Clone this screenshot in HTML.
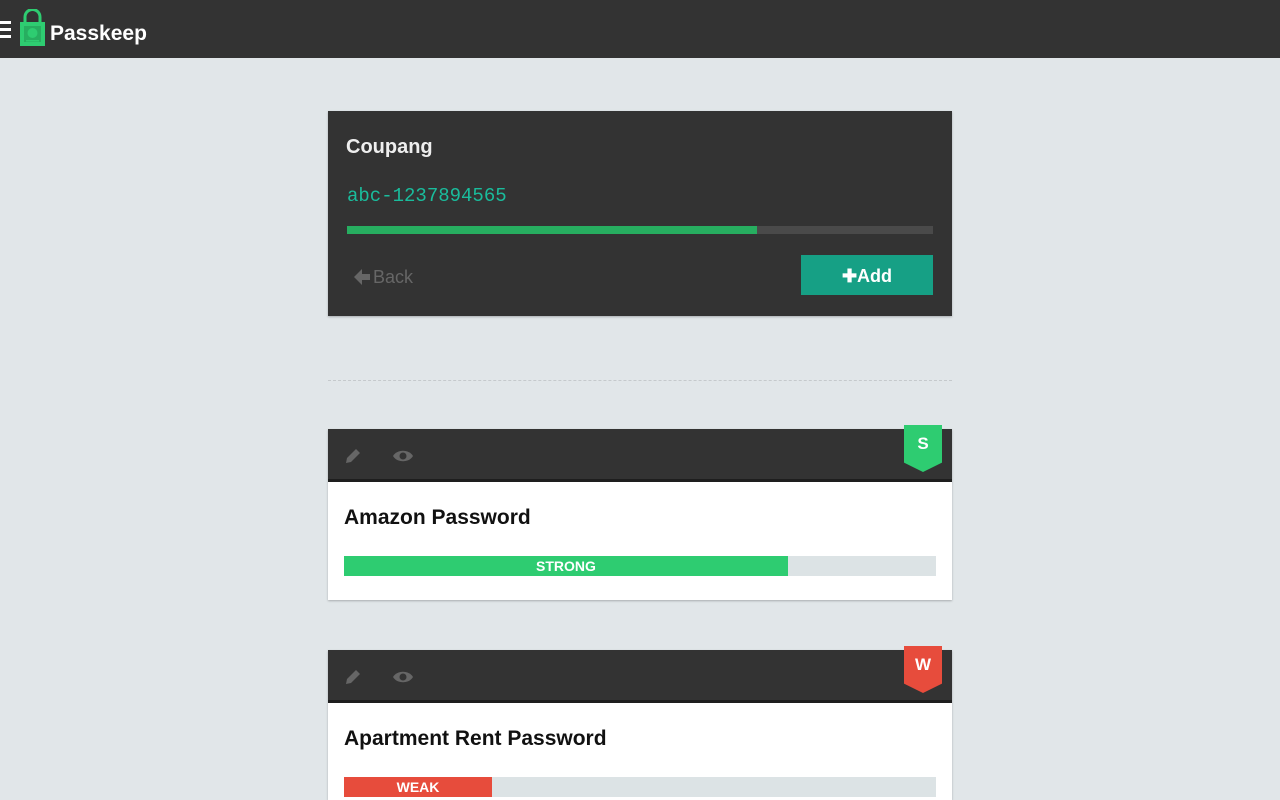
<!DOCTYPE html><html><head><style>
html,body{margin:0;width:1280px;height:800px;overflow:hidden}
body{background:#e1e6e9;font-family:"Liberation Sans",sans-serif;position:relative}
.top{position:absolute;left:0;top:0;width:1280px;height:58px;background:#333}
.abs{position:absolute}
.card{position:absolute;left:328px;width:624px;box-shadow:0 1px 2px rgba(0,0,0,.25)}
.hd{height:50px;background:#333;border-bottom:3px solid #1e1e1e;position:relative}
.bd{background:#fff;position:relative}
.ttl{position:absolute;left:16px;font-weight:bold;font-size:21px;color:#111}
.bar{position:absolute;left:16px;width:592px;height:20px;background:#dce3e5}
.bar div{height:20px;color:#fff;font-weight:bold;font-size:14px;text-align:center;line-height:21px}
.badge{position:absolute;right:10px;top:-4px;width:38px;height:47px;color:#fff;font-weight:bold;font-size:17px;text-align:center;line-height:38px;clip-path:polygon(0 0,100% 0,100% 80%,50% 100%,0 80%)}
</style></head><body>
<div class="top">
<div class="abs" style="left:0;top:21px;width:11px;height:3px;background:#fff;box-shadow:0 7px 0 #fff,0 14px 0 #fff"></div>
<svg class="abs" style="left:19px;top:9px" width="27" height="38" viewBox="0 0 27 38"><path d="M6 13V8a7.5 7.5 0 0 1 15 0v5" fill="none" stroke="#2ecc71" stroke-width="3"/><rect x="1" y="13" width="25" height="24" fill="#2ecc71"/><rect x="5" y="17" width="17" height="16" fill="#27ae60"/><circle cx="13.5" cy="24" r="5" fill="#2ecc71"/><rect x="7" y="31" width="13" height="1.5" fill="#2ecc71"/></svg>
<div class="abs" style="left:50px;top:22px;color:#fff;font-weight:bold;font-size:21px">Passkeep</div>
</div>
<div class="card" style="top:111px;height:205px;background:#333">
<div class="abs" style="left:18px;top:25px;color:#eee;font-weight:bold;font-size:20px">Coupang</div>
<div class="abs" style="left:19px;top:74px;color:#1abc9c;font-family:'Liberation Mono',monospace;font-size:19px">abc-1237894565</div>
<div class="abs" style="left:19px;top:115px;width:586px;height:8px;background:#4a4a4a"><div style="width:410px;height:8px;background:#27ae60"></div></div>
<svg class="abs" style="left:25px;top:157px" width="18" height="18" viewBox="0 0 18 18"><path d="M9 1L1 9l8 8V12h8V6H9z" fill="#666"/></svg>
<div class="abs" style="left:45px;top:156px;color:#666;font-size:18px">Back</div>
<div class="abs" style="left:473px;top:144px;width:132px;height:40px;background:#16a085;color:#fff;font-weight:bold;font-size:18px;text-align:center;line-height:42px">✚Add</div>
</div>
<div class="abs" style="left:328px;top:380px;width:624px;border-top:1px dashed #c5c9cc"></div>

<div class="card" style="top:429px">
<div class="hd">
<svg class="abs" style="left:16px;top:18px" width="18" height="18" viewBox="0 0 18 18"><path d="M2 16l1-5L12 2l4 4-9 9z" fill="#666"/></svg>
<svg class="abs" style="left:64px;top:20px" width="22" height="14" viewBox="0 0 22 14"><path d="M1 7C5 0 17 0 21 7C17 14 5 14 1 7z" fill="#666"/><circle cx="11" cy="7" r="3.5" fill="#333"/></svg>
<div class="badge" style="background:#2ecc71">S</div></div>
<div class="bd" style="height:118px"><div class="ttl" style="top:24px">Amazon Password</div>
<div class="bar" style="top:74px"><div style="width:444px;background:#2ecc71">STRONG</div></div></div>
</div>

<div class="card" style="top:650px">
<div class="hd">
<svg class="abs" style="left:16px;top:18px" width="18" height="18" viewBox="0 0 18 18"><path d="M2 16l1-5L12 2l4 4-9 9z" fill="#666"/></svg>
<svg class="abs" style="left:64px;top:20px" width="22" height="14" viewBox="0 0 22 14"><path d="M1 7C5 0 17 0 21 7C17 14 5 14 1 7z" fill="#666"/><circle cx="11" cy="7" r="3.5" fill="#333"/></svg>
<div class="badge" style="background:#e74c3c">W</div></div>
<div class="bd" style="height:97px"><div class="ttl" style="top:24px">Apartment Rent Password</div>
<div class="bar" style="top:74px"><div style="width:148px;background:#e74c3c">WEAK</div></div></div>
</div>
</body></html>
